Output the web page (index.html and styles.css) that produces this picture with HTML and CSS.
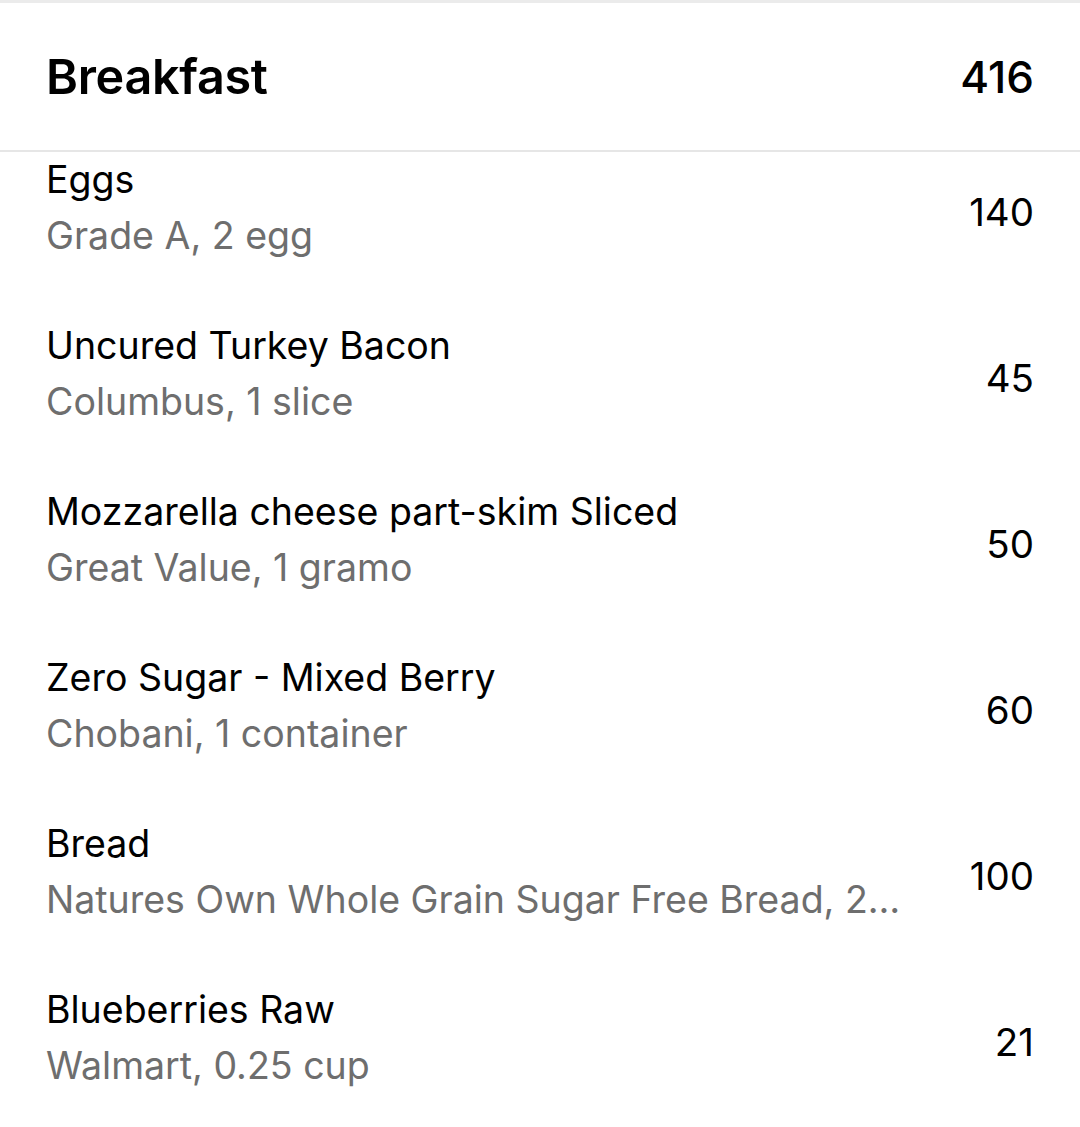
FILE: index.html
```
<!DOCTYPE html>
<html>
<head>
<meta charset="utf-8">
<link rel="stylesheet" href="styles.css">
</head>
<body>
<div class="card">
  <div class="header">
    <span class="meal">Breakfast</span>
    <span class="total">416</span>
  </div>
  <ul class="items">
    <li class="item">
      <div class="info"><div class="name">Eggs</div><div class="desc">Grade A, 2 egg</div></div>
      <div class="cal">140</div>
    </li>
    <li class="item">
      <div class="info"><div class="name">Uncured Turkey Bacon</div><div class="desc">Columbus, 1 slice</div></div>
      <div class="cal">45</div>
    </li>
    <li class="item">
      <div class="info"><div class="name">Mozzarella cheese part-skim Sliced</div><div class="desc">Great Value, 1 gramo</div></div>
      <div class="cal">50</div>
    </li>
    <li class="item">
      <div class="info"><div class="name">Zero Sugar - Mixed Berry</div><div class="desc">Chobani, 1 container</div></div>
      <div class="cal">60</div>
    </li>
    <li class="item">
      <div class="info"><div class="name">Bread</div><div class="desc">Natures Own Whole Grain Sugar Free Bread, 2…</div></div>
      <div class="cal">100</div>
    </li>
    <li class="item">
      <div class="info"><div class="name">Blueberries Raw</div><div class="desc">Walmart, 0.25 cup</div></div>
      <div class="cal">21</div>
    </li>
  </ul>
</div>
</body>
</html>
```
FILE: styles.css
```
html, body {
  margin: 0;
  padding: 0;
  background: #ffffff;
}
body {
  font-family: Inter, "Liberation Sans", sans-serif;
  color: #000;
  width: 1080px;
  height: 1127px;
  overflow: hidden;
}
.card {
  border-top: 3px solid #ebebeb;
}
.header {
  display: flex;
  justify-content: space-between;
  align-items: center;
  height: 149px;
  padding: 0 46px;
  border-bottom: 2px solid #e6e6e6;
  box-sizing: border-box;
}
.meal {
  font-size: 48.5px;
  font-weight: 600;
  letter-spacing: -0.3px;
}
.total {
  font-size: 44px;
  font-weight: 500;
}
.items {
  list-style: none;
  margin: 0;
  padding: 0;
}
.item {
  display: flex;
  align-items: center;
  justify-content: space-between;
  padding: 0 46px 54px 46px;
  height: 166px;
  box-sizing: border-box;
}
.info {
  min-width: 0;
  flex: 1;
}
.name {
  font-size: 37.5px;
  line-height: 56px;
  color: #000;
}
.desc {
  font-size: 37.5px;
  line-height: 56px;
  color: #6e6e6e;
  white-space: nowrap;
}
.cal {
  font-size: 38.5px;
  color: #000;
  padding-top: 8px;
}
```
